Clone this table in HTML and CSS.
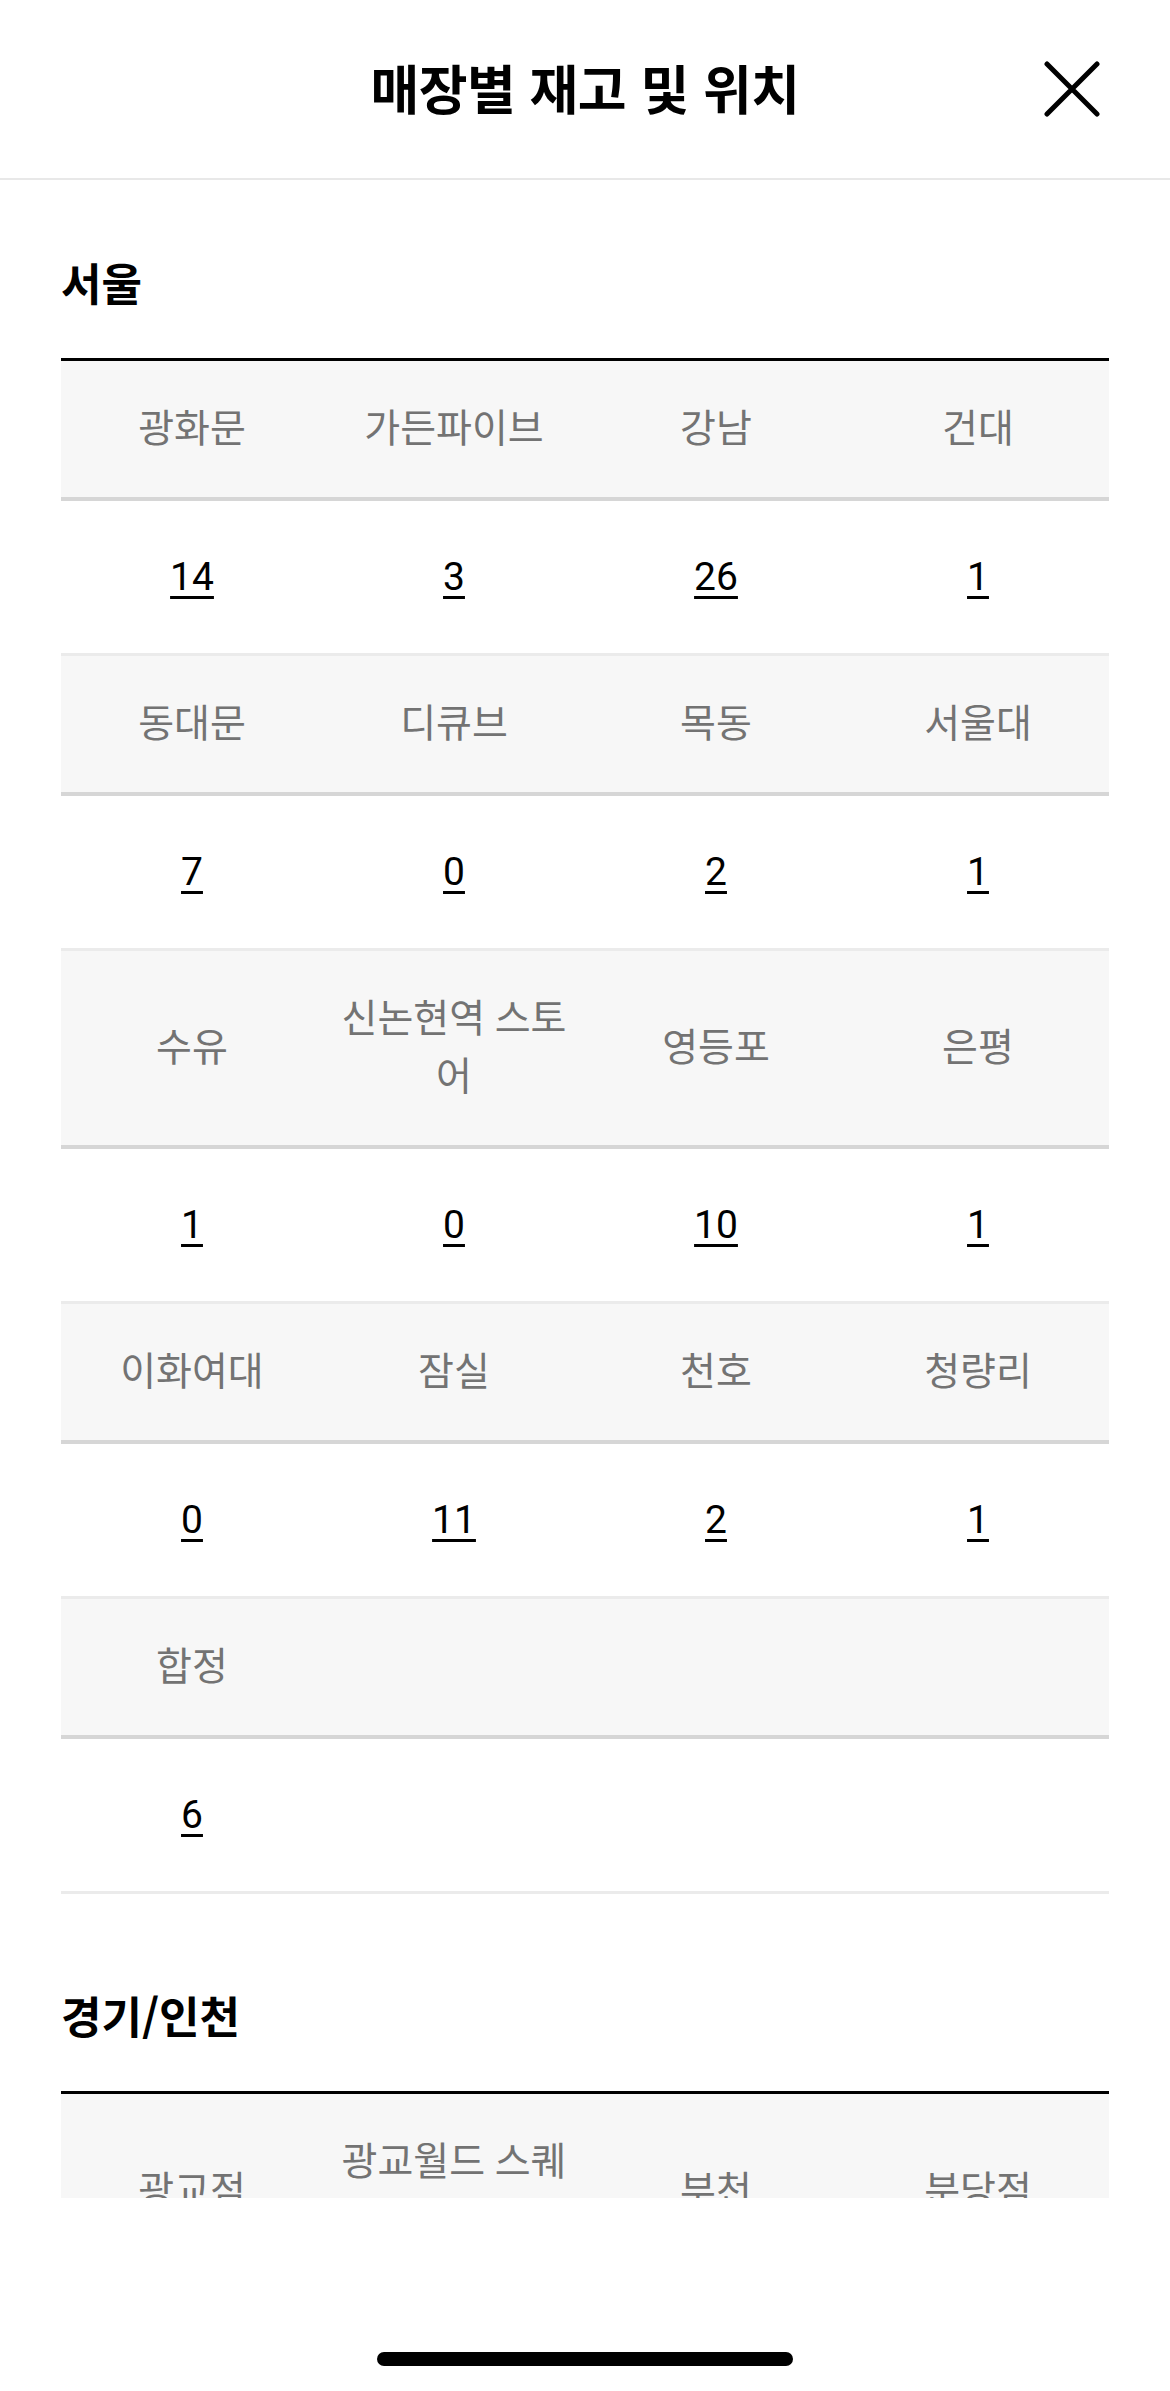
FILE: index.html
```html
<!DOCTYPE html>
<html lang="ko">
<head>
    <meta charset="UTF-8">
    <meta name="viewport" content="width=device-width, initial-scale=1.0">
    <title>매장별 재고 및 위치</title>
    <link rel="stylesheet" href="styles.css">
</head>
<body>
    <header class="top">
        <h1 class="title">매장별 재고 및 위치</h1>
        <button class="close" aria-label="닫기">
            <svg width="56" height="56" viewBox="0 0 56 56">
                <path d="M3 3 L53 53 M53 3 L3 53" stroke="#000" stroke-width="5" stroke-linecap="round" fill="none"/>
            </svg>
        </button>
    </header>

    <main class="scroll">
        <section class="region">
            <h2 class="region-name">서울</h2>
            <table class="stock">
                <tr class="name"><td>광화문</td><td>가든파이브</td><td>강남</td><td>건대</td></tr>
                <tr class="count"><td><a>14</a></td><td><a>3</a></td><td><a>26</a></td><td><a>1</a></td></tr>
                <tr class="name"><td>동대문</td><td>디큐브</td><td>목동</td><td>서울대</td></tr>
                <tr class="count"><td><a>7</a></td><td><a>0</a></td><td><a>2</a></td><td><a>1</a></td></tr>
                <tr class="name"><td>수유</td><td>신논현역 스토어</td><td>영등포</td><td>은평</td></tr>
                <tr class="count"><td><a>1</a></td><td><a>0</a></td><td><a>10</a></td><td><a>1</a></td></tr>
                <tr class="name"><td>이화여대</td><td>잠실</td><td>천호</td><td>청량리</td></tr>
                <tr class="count"><td><a>0</a></td><td><a>11</a></td><td><a>2</a></td><td><a>1</a></td></tr>
                <tr class="name"><td>합정</td><td></td><td></td><td></td></tr>
                <tr class="count"><td><a>6</a></td><td></td><td></td><td></td></tr>
            </table>
        </section>

        <section class="region">
            <h2 class="region-name">경기/인천</h2>
            <table class="stock">
                <tr class="name"><td>광교점</td><td>광교월드 스퀘어</td><td>부천</td><td>분당점</td></tr>
                <tr class="count"><td><a>5</a></td><td><a>2</a></td><td><a>4</a></td><td><a>8</a></td></tr>
            </table>
        </section>
    </main>

    <footer class="home">
        <div class="home-bar"></div>
    </footer>
</body>
</html>
```

FILE: styles.css
```css
body {
    margin: 0;
    width: 1170px;
    height: 2391px;
    display: flex;
    flex-direction: column;
    background-color: #fff;
    color: #000;
    font-family: Roboto, "Noto Sans CJK KR", sans-serif;
    overflow: hidden;
}
.top {
    height: 180px;
    flex-shrink: 0;
    display: grid;
    grid-template-columns: 1fr auto 1fr;
    align-items: center;
    padding-right: 72px;
    padding-left: 72px;
    padding-bottom: 4px;
    box-sizing: border-box;
    border-bottom: 2px solid #e8e8e8;
}
.title {
    grid-column: 2;
    margin: 0;
    font-family: "Noto Sans CJK KR", sans-serif;
    font-size: 53px;
    font-weight: 700;
    line-height: 64px;
    letter-spacing: -0.5px;
}
.close {
    grid-column: 3;
    justify-self: end;
    width: 56px;
    height: 56px;
    padding: 0;
    margin-right: -2px;
    margin-top: 4px;
    border: none;
    background: none;
}
.close svg {
    display: block;
}
.scroll {
    flex: 1;
    overflow: hidden;
    padding: 0 61px;
}
.region {
    padding-top: 72px;
    padding-bottom: 19px;
}
.region-name {
    margin: 0 0 46px;
    font-family: "Noto Sans CJK KR", sans-serif;
    font-size: 44px;
    font-weight: 700;
    line-height: 60px;
}
.stock {
    width: 100%;
    table-layout: fixed;
    border-collapse: collapse;
    border-top: 3px solid #000;
}
.stock td {
    padding: 0 5px;
    text-align: center;
    font-size: 39px;
    line-height: 58px;
}
.name td {
    padding-top: 39px;
    padding-bottom: 39px;
    background-color: #f7f7f7;
    color: #737373;
    border-bottom: 4px solid #d6d6d6;
}
.count td {
    padding-top: 47px;
    padding-bottom: 47px;
    border-bottom: 3px solid #ebebeb;
}
.count a {
    color: #000;
    text-decoration: underline;
    text-decoration-thickness: 3px;
    text-underline-offset: 6px;
}
.home {
    height: 193px;
    flex-shrink: 0;
    display: flex;
    justify-content: center;
    align-items: flex-end;
    padding-bottom: 25px;
    box-sizing: border-box;
}
.home-bar {
    width: 416px;
    height: 14px;
    border-radius: 7px;
    background-color: #000;
}
```
